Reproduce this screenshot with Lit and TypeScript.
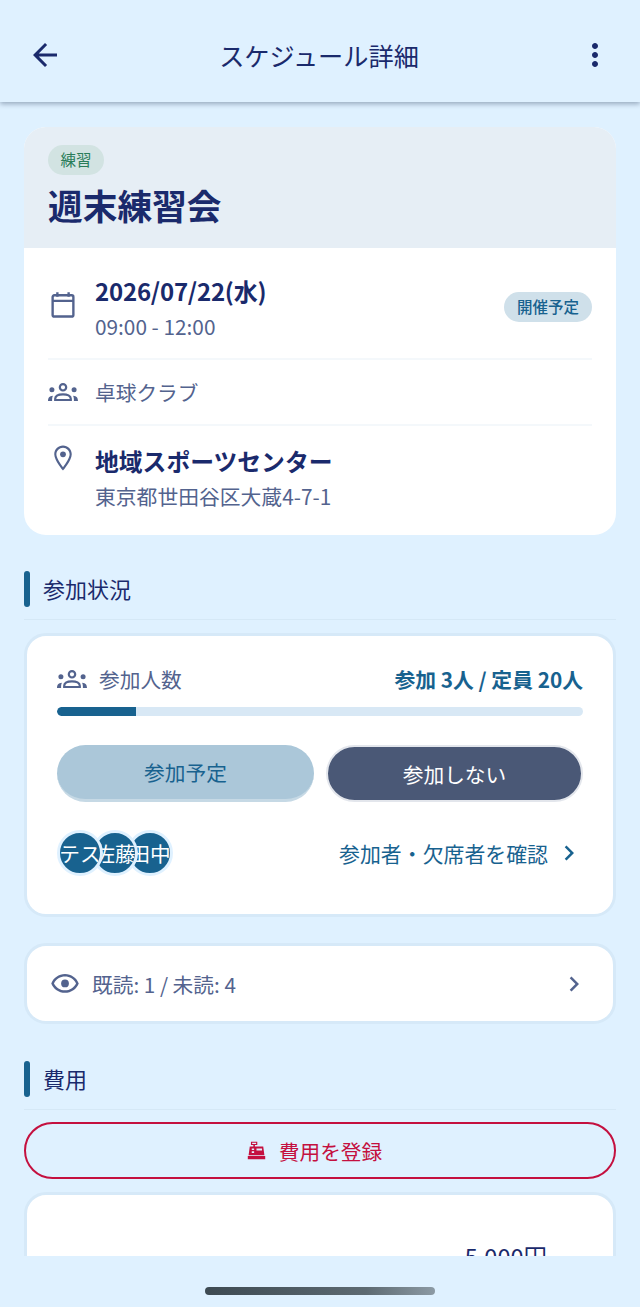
import { LitElement, html, css, svg } from "lit";
import { customElement } from "lit/decorators.js";

const icon = (d: unknown, cls = "") => html`<svg class="ic ${cls}" viewBox="0 0 24 24" fill="currentColor">${d}</svg>`;
const back = svg`<path d="M20 11H7.83l5.59-5.59L12 4l-8 8 8 8 1.41-1.41L7.83 13H20v-2z"/>`;
const more = svg`<path d="M12 8c1.1 0 2-.9 2-2s-.9-2-2-2-2 .9-2 2 .9 2 2 2zm0 2c-1.1 0-2 .9-2 2s.9 2 2 2 2-.9 2-2-.9-2-2-2zm0 6c-1.1 0-2 .9-2 2s.9 2 2 2 2-.9 2-2-.9-2-2-2z"/>`;
const cal = svg`<g fill="none" stroke="currentColor" stroke-width="1.900"><rect x="3.700" y="4.200" width="16.600" height="17" rx="1.300"/><path d="M3.700 8.700h16.600M7.500 1.800v3.600M16.500 1.800v3.600"/></g>`;
const groups = html`<svg class="ic grp" viewBox="0 0 30 18" fill="currentColor">
  <circle cx="15" cy="4.300" r="3.200" fill="none" stroke="currentColor" stroke-width="2.200"/>
  <circle cx="3.900" cy="6.700" r="2.500"/><circle cx="26.100" cy="6.700" r="2.500"/>
  <path d="M7.200 17v-1.200c0-2.900 3.400-4.500 7.800-4.500s7.800 1.600 7.800 4.500V17z" fill="none" stroke="currentColor" stroke-width="2.200"/>
  <path d="M0 18c0-3 1.300-5.200 4.900-5.300-.5 1.200-.8 2.400-.8 3.600V18zM30 18c0-3-1.300-5.200-4.900-5.300.5 1.200.8 2.400.8 3.600V18z"/>
</svg>`;
const pin = svg`<path d="M12 2C8.130 2 5 5.130 5 9c0 5.250 7 13 7 13s7-7.750 7-13c0-3.870-3.130-7-7-7zM6.700 9c0-2.900 2.400-5.300 5.300-5.300s5.300 2.400 5.300 5.300c0 2.880-3.200 7.500-5.300 10.300C9.900 16.500 6.700 11.850 6.700 9z"/><circle cx="12" cy="9" r="2.300"/>`;
const eye = svg`<path d="M12 6c3.790 0 7.170 2.130 8.820 5.500C19.170 14.870 15.790 17 12 17s-7.170-2.130-8.820-5.500C4.830 8.130 8.210 6 12 6m0-2C7 4 2.730 7.110 1 11.500 2.730 15.890 7 19 12 19s9.270-3.110 11-7.500C21.270 7.110 17 4 12 4z"/><circle cx="12" cy="11.500" r="3.100"/>`;
const chev = svg`<path d="M10 6L8.590 7.410 13.170 12l-4.580 4.590L10 18l6-6z"/>`;
const register = svg`<path fill-rule="evenodd" d="M5 1h8v4H10v2h10.500L22 18H2L3.500 7H8V5H5zM6.500 2.300v1.400h5V2.300zM6 9.500v2h3v-2zM12 9.500v2.500h7V9.500zM6 13v2h3v-2zM1 19h22v4H1z"/>`;

@customElement("app-root")
export class AppRoot extends LitElement {
  static styles = css`
    :host {
      display: flex;
      flex-direction: column;
      width: 640px;
      height: 1307px;
      overflow: hidden;
      background: #dff1ff;
      color: #1a2a6c;
      font-family: "Noto Sans CJK JP", "Noto Sans", sans-serif;
      font-size: 20.700px;
    }
    .ic { display: block; flex: none; }
    .top {
      flex: none;
      height: 102px;
      box-sizing: border-box;
      padding: 8px 27px 0;
      display: flex;
      align-items: center;
      justify-content: space-between;
      background: #dff1ff;
      box-shadow: 0 2px 5px rgba(40, 60, 90, 0.4);
      position: relative;
      z-index: 1;
    }
    .top .ic { width: 36px; height: 36px; }
    .top h1 { margin: 0 0 0 -2px; font-size: 25.200px; line-height: 36px; font-weight: 400; }
    main {
      flex: none;
      height: 1154px;
      box-sizing: border-box;
      overflow: hidden;
      padding: 25px 24px 0;
    }
    .event { background: #fff; border-radius: 22px; overflow: hidden; }
    .ehead { height: 121px; box-sizing: border-box; padding: 18px 24px 0; background: #e6eef5; }
    .tag {
      display: inline-block;
      height: 30px;
      line-height: 29px;
      padding: 0 12.500px;
      border-radius: 15px;
      background: #d2e3e2;
      color: #2a7d5a;
      font-size: 15.500px;
      vertical-align: top;
    }
    .ehead h2 { margin: 4px 0 0; font-size: 34.700px; line-height: 52px; font-weight: 700; }
    .ebody { padding: 0 24px; }
    .row { display: flex; align-items: flex-start; gap: 18px; border-bottom: 2px solid #f4f8fb; color: #53638e; }
    .row:last-child { border-bottom: 0; }
    .r1 { height: 112px; box-sizing: border-box; padding-top: 25px; }
    .r2 { height: 66px; box-sizing: border-box; align-items: center; }
    .r3 { height: 109px; box-sizing: border-box; padding-top: 17px; }
    .iw { width: 30px; flex: none; display: flex; justify-content: center; }
    .r1 .ic, .r3 .ic { width: 30px; height: 30px; }
    .r1 .iw { padding-top: 17px; }
    .grp { width: 30px; height: 18px; }
    .txt { flex: 1; min-width: 0; margin-left: -1px; }
    .strong { color: #1a2a6c; font-weight: 700; font-size: 24px; letter-spacing: -0.200px; line-height: 36px; }
    .r3 .strong { font-size: 23.800px; letter-spacing: 0; }
    .sub { font-size: 20.800px; line-height: 36px; margin-top: -1px; }
    .status {
      align-self: flex-start;
      margin-top: 19px;
      height: 30px;
      line-height: 29px;
      padding: 0 13px;
      border-radius: 15px;
      background: #cfe0ea;
      color: #18628f;
      font-size: 15.500px;
      font-weight: 500;
    }
    .sec { display: flex; flex-direction: column; margin-top: 36px; border-bottom: 1px solid #d5e8f6; padding-bottom: 12px; }
    .sec h3 {
      margin: 0;
      height: 36px;
      line-height: 34px;
      font-size: 22px;
      font-weight: 400;
      display: flex;
      gap: 13px;
    }
    .bar { width: 6px; height: 36px; border-radius: 3px; background: #18628f; }
    .card { background: #fff; border: 3px solid #d6e9f8; border-radius: 22px; box-sizing: border-box; }
    .part { margin-top: 13px; height: 284px; padding: 28px 30px 0; }
    .count { display: flex; align-items: center; justify-content: space-between; height: 30px; }
    .count .lab { display: flex; align-items: center; gap: 12px; color: #53638e; font-size: 20.700px; }
    .count .val { color: #18628f; font-weight: 700; font-size: 20.800px; }
    .track { margin-top: 13px; height: 9px; border-radius: 5px; background: #d8e8f5; overflow: hidden; }
    .fill { height: 100%; background: #18628f; border-radius: 5px 0 0 5px; }
    .btns { margin-top: 29px; display: grid; grid-template-columns: 1fr 1fr; gap: 12px; }
    .btn { height: 57px; box-sizing: border-box; border-radius: 29px; display: flex; align-items: center; justify-content: center; font-size: 20.700px; }
    .on { background: #abc7d9; color: #18628f; border-bottom: 3px solid #c6d9e5; }
    .off { background: #4a5876; color: #fff; border: 2px solid #e3e6ec; }
    .who { margin-top: 28px; display: flex; align-items: center; justify-content: space-between; height: 46px; }
    .avs { display: flex; }
    .av {
      width: 46px;
      height: 46px;
      box-sizing: border-box;
      border: 3px solid #dff1ff;
      border-radius: 50%;
      background: #18628f;
      color: #fff;
      font-size: 20.700px;
      line-height: 40px;
      white-space: nowrap;
      display: flex;
      justify-content: center;
      overflow: hidden;
      position: relative;
    }
    .av + .av { margin-left: -11px; }
    .link { display: flex; align-items: center; color: #18628f; font-size: 20.900px; margin-right: -1px; }
    .link .ic { width: 30px; height: 30px; margin-left: 6px; }
    .read { margin-top: 26px; margin-bottom: 37px; height: 81px; padding: 0 23px; display: flex; align-items: center; color: #53638e; font-size: 20.700px; }
    .read .eye { width: 30px; height: 30px; margin-right: 12px; }
    .read span { flex: 1; }
    .read .ic:last-child { width: 30px; height: 30px; margin-right: 1px; }
    .read + .sec { margin-top: 0; }
    .reg {
      margin-top: 12px;
      height: 57px;
      box-sizing: border-box;
      border: 2px solid #c4103f;
      border-radius: 29px;
      padding-right: 11px;
      display: flex;
      align-items: center;
      justify-content: center;
      gap: 13px;
      color: #c4103f;
      font-size: 20.700px;
    }
    .reg .ic { width: 19px; height: 19px; }
    .fee { margin-top: 13px; height: 200px; padding: 46px 66px 0 0; text-align: right; font-size: 23.500px; line-height: 30px; }
    .home { flex: 1; display: flex; justify-content: center; padding-top: 31px; background: #dff1ff; }
    .pill { width: 230px; height: 8px; border-radius: 4px; background: linear-gradient(90deg, #3d4a52, #5d6a72 70%, #8c9aa4); }
  `;

  render() {
    return html`
      <header class="top">
        ${icon(back)}
        <h1>スケジュール詳細</h1>
        ${icon(more)}
      </header>
      <main>
        <section class="event">
          <div class="ehead">
            <span class="tag">練習</span>
            <h2>週末練習会</h2>
          </div>
          <div class="ebody">
            <div class="row r1">
              <div class="iw">${icon(cal)}</div>
              <div class="txt">
                <div class="strong">2026/07/22(水)</div>
                <div class="sub">09:00 - 12:00</div>
              </div>
              <span class="status">開催予定</span>
            </div>
            <div class="row r2">
              <div class="iw">${groups}</div>
              <div class="txt">卓球クラブ</div>
            </div>
            <div class="row r3">
              <div class="iw">${icon(pin)}</div>
              <div class="txt">
                <div class="strong">地域スポーツセンター</div>
                <div class="sub">東京都世田谷区大蔵4-7-1</div>
              </div>
            </div>
          </div>
        </section>

        <div class="sec"><h3><i class="bar"></i>参加状況</h3></div>
        <section class="card part">
          <div class="count">
            <div class="lab">${groups}参加人数</div>
            <div class="val">参加 3人 / 定員 20人</div>
          </div>
          <div class="track"><div class="fill" style="width:15%"></div></div>
          <div class="btns">
            <div class="btn on">参加予定</div>
            <div class="btn off">参加しない</div>
          </div>
          <div class="who">
            <div class="avs">
              <div class="av" style="z-index:3">テス</div>
              <div class="av" style="z-index:2">佐藤</div>
              <div class="av" style="z-index:1">田中</div>
            </div>
            <div class="link">参加者・欠席者を確認${icon(chev)}</div>
          </div>
        </section>

        <section class="card read">
          ${icon(eye, "eye")}
          <span>既読: 1 / 未読: 4</span>
          ${icon(chev)}
        </section>

        <div class="sec"><h3><i class="bar"></i>費用</h3></div>
        <div class="reg">${icon(register)}費用を登録</div>
        <section class="card fee">5,000円</section>
      </main>
      <div class="home"><div class="pill"></div></div>
    `;
  }
}
